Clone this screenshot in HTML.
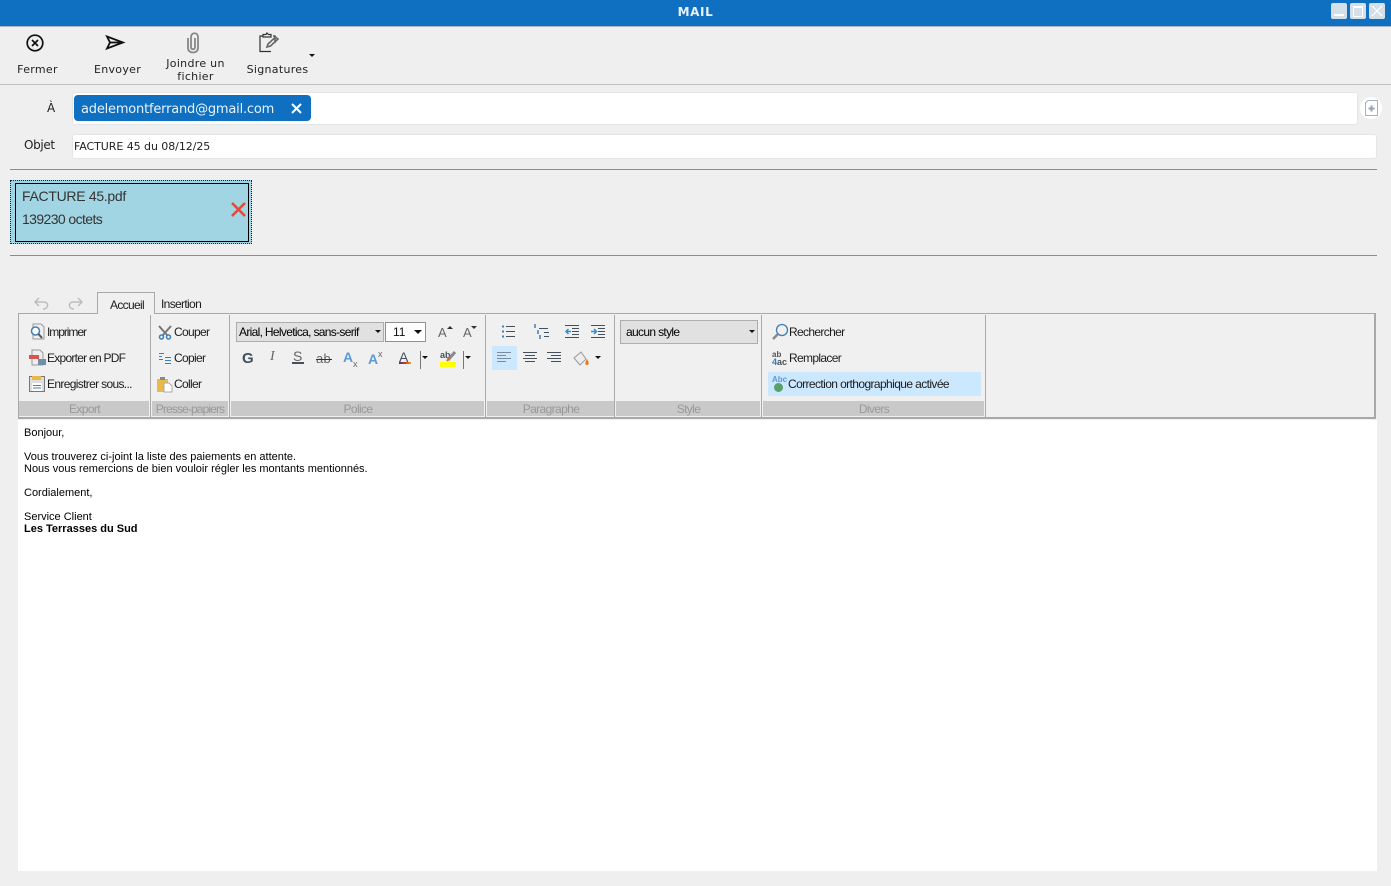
<!DOCTYPE html>
<html lang="fr"><head><meta charset="utf-8"><title>MAIL</title>
<style>
html,body{margin:0;padding:0;width:1391px;height:886px;overflow:hidden;background:#efefef;font-family:"Liberation Sans",sans-serif}
.a,.t{position:absolute}
.t{white-space:nowrap;line-height:14px}
.v{font-family:"DejaVu Sans",sans-serif;font-size:11px;letter-spacing:.3px;color:#222;text-align:center}
.r{font-size:12px;letter-spacing:-.66px;color:#1c1c1c}
.g{background:#c9c9c9;height:15px;top:401px;color:#999;font-size:12px;letter-spacing:-.62px;text-align:center;line-height:16px;white-space:nowrap;text-indent:1px;overflow:hidden}
.d{background:#a9a9a9;width:1px;top:315px;height:102px}
svg{position:absolute;overflow:visible}
.m{font-size:11px;line-height:12px;color:#000;left:24px;white-space:nowrap;position:absolute}
</style></head><body>
<div class="a" style="left:0;top:0;width:1391px;height:27px;background:#0f6fc0;border-bottom:1px solid #a8b4bf;box-sizing:border-box"></div>
<div class="t" style="left:0;width:1391px;top:5px;text-align:center;font:bold 12px/14px 'DejaVu Sans',sans-serif;letter-spacing:.6px;color:#e8f0f8">MAIL</div>
<div class="a" style="left:1331px;top:3px;width:16px;height:16px;background:#d5dfe8;border-radius:2px"></div>
<div class="a" style="left:1334px;top:14px;width:10px;height:2px;background:#fff"></div>
<div class="a" style="left:1350px;top:3px;width:16px;height:16px;background:#d5dfe8;border-radius:2px"></div>
<div class="a" style="left:1353px;top:6px;width:8px;height:8px;border:1px solid #fff;border-top-width:2px"></div>
<div class="a" style="left:1369px;top:3px;width:16px;height:16px;background:#d5dfe8;border-radius:2px"></div>
<svg style="left:1369px;top:3px" width="16" height="16"><path d="M3 3L13 13M13 3L3 13" stroke="#fff" stroke-width="1.2"/></svg>

<svg style="left:26px;top:34px" width="18" height="18" fill="none" stroke="#111"><circle cx="9" cy="9" r="7.800" stroke-width="1.700"/><path d="M6 6L12 12M12 6L6 12" stroke-width="1.700"/></svg>
<svg style="left:106px;top:35px" width="19" height="16" fill="none" stroke="#111" stroke-width="1.800"><path d="M1 1.500L17 7.500L1 13.500L4 7.500Z"/><path d="M4 7.500H17"/></svg>
<svg style="left:186px;top:33px" width="14" height="21" fill="none" stroke="#888" stroke-width="1.800"><path d="M2 5V15C2 21 12 21 12 15V4C12 -1 5 -1 5 4V14C5 17 9 17 9 14V5"/></svg>
<svg style="left:259px;top:32px" width="21" height="21" fill="none" stroke="#333" stroke-width="1.200"><path d="M14 4H16V11M12 19.500H1V4H4"/><path d="M4 5V2.500H7L8 1L9.500 2.500H12V5Z"/><path d="M8 15L9 12L16.500 5L19 7L11.500 14Z" stroke="#666" stroke-width="1.600"/></svg>
<div class="t v" style="left:12px;top:63px;width:51px">Fermer</div>
<div class="t v" style="left:87px;top:63px;width:61px">Envoyer</div>
<div class="t v" style="left:160px;top:57px;width:71px;line-height:13px;white-space:normal">Joindre un fichier</div>
<div class="t v" style="left:243px;top:63px;width:69px">Signatures</div>
<div class="a" style="left:309px;top:54px;border:3px solid transparent;border-top:3px solid #111;border-bottom:0;width:0"></div>
<div class="a" style="left:0;top:84px;width:1391px;height:1px;background:#bfbfbf"></div>

<div class="t" style="left:47px;top:101px;font:12px/14px 'DejaVu Sans',sans-serif;color:#222">À</div>
<div class="a" style="left:72px;top:92px;width:1286px;height:33px;background:#fff;border:1px solid #e3e6e8;box-sizing:border-box;border-radius:3px"></div>
<div class="a" style="left:74px;top:95px;width:237px;height:26px;background:#0f6fc0;border-radius:4px"></div>
<div class="t" style="left:81px;top:102px;font:13px/15px 'DejaVu Sans',sans-serif;letter-spacing:-.2px;color:#e8f3fb">adelemontferrand@gmail.com</div>
<svg style="left:291px;top:103px" width="11" height="11"><path d="M1 1L10 10M10 1L1 10" stroke="#fff" stroke-width="2"/></svg>
<div class="a" style="left:1360px;top:97px;width:22px;height:22px;border-radius:50%;background:#fff"></div>
<svg style="left:1365px;top:100px" width="13" height="16" fill="none"><path d="M3 .5H12.500V15.500H.5V3Z" stroke="#a3b2c2"/><path d="M6.500 5.500V11.500M3.500 8.500H9.500" stroke="#93a3b3" stroke-width="2"/></svg>
<div class="t" style="left:24px;top:138px;font:12px/14px 'DejaVu Sans',sans-serif;letter-spacing:-.35px;color:#222">Objet</div>
<div class="a" style="left:72px;top:134px;width:1305px;height:25px;background:#fff;border:1px solid #e3e6e8;box-sizing:border-box;border-radius:3px"></div>
<div class="t" style="left:74px;top:140px;font:11px/14px 'DejaVu Sans',sans-serif;letter-spacing:-.06px;color:#222">FACTURE 45 du 08/12/25</div>
<div class="a" style="left:10px;top:169px;width:1367px;height:1px;background:#8c8c8c"></div>

<div class="a" style="left:10px;top:180px;width:242px;height:64px;box-sizing:border-box;background:#a2d5e3;border:1px dotted #222"></div>
<div class="a" style="left:15px;top:183px;width:234px;height:59px;box-sizing:border-box;background:#a2d5e3;border:1px solid #000"></div>
<div class="t" style="left:22px;top:188px;font-size:14px;line-height:16px;letter-spacing:-.3px;color:#333">FACTURE 45.pdf</div>
<div class="t" style="left:22px;top:211px;font-size:14px;line-height:16px;letter-spacing:-.6px;color:#333">139230 octets</div>
<svg style="left:231px;top:202px" width="15" height="15"><path d="M1 1L14 14M14 1L1 14" stroke="#e04a3a" stroke-width="2.600"/></svg>
<div class="a" style="left:10px;top:255px;width:1367px;height:1px;background:#8c8c8c"></div>

<svg style="left:34px;top:297px" width="16" height="14" fill="none" stroke="#bdbdbd" stroke-width="1.500"><path d="M5 1L1 5L5 9M1 5H10C15 5 15 12 9 12"/></svg>
<svg style="left:67px;top:297px" width="16" height="14" fill="none" stroke="#bdbdbd" stroke-width="1.500"><path d="M11 1L15 5L11 9M15 5H6C1 5 1 12 7 12"/></svg>
<div class="a" style="left:18px;top:313px;width:1358px;height:106px;background:#f0f0f0;border:1px solid #a9a9a9;border-right-width:2px;border-bottom-width:2px;box-sizing:border-box"></div>
<div class="a" style="left:97px;top:292px;width:58px;height:22px;background:#f0f0f0;border:1px solid #a9a9a9;border-bottom:0;box-sizing:border-box"></div>
<div class="t r" style="left:110px;top:298px">Accueil</div>
<div class="t r" style="left:161px;top:297px">Insertion</div>

<div class="a d" style="left:150px"></div><div class="a d" style="left:229px"></div><div class="a d" style="left:485px"></div><div class="a d" style="left:614px"></div><div class="a d" style="left:761px"></div><div class="a d" style="left:985px"></div>
<div class="a g" style="left:19px;width:130px">Export</div>
<div class="a g" style="left:152px;width:76px;text-indent:0;letter-spacing:-.88px">Presse-papiers</div>
<div class="a g" style="left:231px;width:253px">Police</div>
<div class="a g" style="left:487px;width:127px">Paragraphe</div>
<div class="a g" style="left:616px;width:144px">Style</div>
<div class="a g" style="left:763px;width:221px">Divers</div>

<!-- Export -->
<svg style="left:29px;top:323px" width="17" height="17" fill="none"><path d="M4 1H12L15 4V16H4Z" fill="#eee" stroke="#999"/><circle cx="6.500" cy="8" r="4" fill="#fff" stroke="#3d7fb8" stroke-width="1.500"/><path d="M9.500 11L13 15" stroke="#555" stroke-width="2"/></svg>
<svg style="left:29px;top:349px" width="17" height="17" fill="none"><path d="M3 1H11L14 4V16H3Z" fill="#eee" stroke="#999"/><rect x="0" y="6" width="10" height="4" fill="#d9534f"/><rect x="9" y="10" width="8" height="6" fill="#6f8fa8"/></svg>
<svg style="left:29px;top:375px" width="16" height="17"><rect x=".5" y="1.500" width="15" height="15" fill="#ddd" stroke="#777"/><rect x="3" y="1" width="9" height="4" fill="#e8b84a"/><rect x="3" y="8" width="10" height="8" fill="#fff"/><path d="M4 10.500H12M4 13H12" stroke="#4a7fb0"/></svg>
<div class="t r" style="left:47px;top:325px;letter-spacing:-1.05px">Imprimer</div>
<div class="t r" style="left:47px;top:351px;letter-spacing:-.74px">Exporter en PDF</div>
<div class="t r" style="left:47px;top:377px">Enregistrer sous...</div>

<!-- Presse-papiers -->
<svg style="left:158px;top:325px" width="14" height="15" fill="none"><path d="M1 1L9 10M13 1L5 10" stroke="#777" stroke-width="2"/><circle cx="3.500" cy="12" r="2" stroke="#3d7fb8" stroke-width="1.500"/><circle cx="10.500" cy="12" r="2" stroke="#3d7fb8" stroke-width="1.500"/></svg>
<svg style="left:158px;top:352px" width="14" height="13" fill="none" stroke="#3d7fb8"><path d="M1 1.500H6M1 4.500H4M1 7.500H5M7 5.500H13M7 8.500H13M7 11.500H13"/></svg>
<svg style="left:157px;top:376px" width="16" height="16"><rect x="0" y="3" width="11" height="13" fill="#e9b949"/><rect x="3" y="1" width="5" height="3" fill="#888"/><path d="M7 7H12L15 10V16H7Z" fill="#fff" stroke="#aaa"/></svg>
<div class="t r" style="left:174px;top:325px">Couper</div>
<div class="t r" style="left:174px;top:351px">Copier</div>
<div class="t r" style="left:174px;top:377px">Coller</div>

<!-- Police -->
<div class="a" style="left:236px;top:322px;width:148px;height:20px;background:#e1e1e1;border:1px solid #adadad;box-sizing:border-box"></div>
<div class="t r" style="left:239px;top:325px;color:#000;letter-spacing:-.68px">Arial, Helvetica, sans-serif</div>
<div class="a" style="left:375px;top:330px;border:3px solid transparent;border-top:3px solid #111;border-bottom:0"></div>
<div class="a" style="left:385px;top:322px;width:41px;height:20px;background:#fff;border:1px solid #8f8f8f;box-sizing:border-box"></div>
<div class="t" style="left:393px;top:325px;font-size:12px;color:#111">11</div>
<div class="a" style="left:414px;top:330px;border:4px solid transparent;border-top:4px solid #111;border-bottom:0"></div>
<div class="t" style="left:438px;top:326px;font-size:13px;color:#666">A</div><div class="a" style="left:447px;top:326px;border:3px solid transparent;border-bottom:3px solid #333;border-top:0"></div>
<div class="t" style="left:463px;top:326px;font-size:13px;color:#666">A</div><div class="a" style="left:471px;top:326px;border:3px solid transparent;border-top:3px solid #333;border-bottom:0"></div>
<div class="t" style="left:242px;top:352px;font:bold 15px/14px 'Liberation Sans',sans-serif;color:#44505c">G</div>
<div class="t" style="left:270px;top:350px;font:italic 14px/14px 'Liberation Serif',serif;color:#666">I</div>
<div class="t" style="left:293px;top:349px;font-size:14px;color:#666">S</div><div class="a" style="left:292px;top:362px;width:12px;height:2px;background:#44505c"></div>
<div class="t" style="left:316px;top:352px;font-size:13px;color:#666;letter-spacing:.3px">ab</div><div class="a" style="left:316px;top:359px;width:16px;height:1px;background:#333"></div>
<div class="t" style="left:343px;top:350px;font:bold 14px/14px 'Liberation Sans',sans-serif;color:#5b9bd5">A</div><div class="t" style="left:353px;top:357px;font-size:9px;color:#666">x</div>
<div class="t" style="left:368px;top:352px;font:bold 14px/14px 'Liberation Sans',sans-serif;color:#5b9bd5">A</div><div class="t" style="left:378px;top:347px;font-size:9px;color:#666">x</div>
<div class="t" style="left:399px;top:350px;font-size:14px;color:#44505c">A</div>
<div class="a" style="left:399px;top:362px;width:12px;height:2px;background:linear-gradient(90deg,#3a3a8a,#c33,#e8a020)"></div>
<div class="a" style="left:420px;top:351px;width:1px;height:18px;background:#777"></div><div class="a" style="left:422px;top:356px;border:3px solid transparent;border-top:3px solid #111;border-bottom:0"></div>
<div class="t" style="left:440px;top:350px;font:bold 9px/10px 'Liberation Sans',sans-serif;color:#44505c">ab</div>
<svg style="left:446px;top:351px" width="11" height="11"><path d="M2 9L9 1" stroke="#888" stroke-width="3"/><path d="M1 10L3 7" stroke="#e0603a" stroke-width="2"/></svg>
<div class="a" style="left:440px;top:362px;width:16px;height:5px;background:#ffff00"></div>
<div class="a" style="left:463px;top:351px;width:1px;height:18px;background:#777"></div><div class="a" style="left:465px;top:356px;border:3px solid transparent;border-top:3px solid #111;border-bottom:0"></div>

<!-- Paragraphe -->
<svg style="left:502px;top:325px" width="13" height="13" fill="none"><path d="M4 1.500H13M4 6.500H13M4 11.500H13" stroke="#44505c"/><path d="M0 1.500H2M0 6.500H2M0 11.500H2" stroke="#3d7fb8" stroke-width="2"/></svg>
<svg style="left:534px;top:324px" width="16" height="16" fill="none"><path d="M5 4.500H14M10 8.500H15M10 12.500H15" stroke="#44505c"/><path d="M1 0V4M4 6V10M6 11V15" stroke="#3d7fb8" stroke-width="1.500"/></svg>
<svg style="left:565px;top:325px" width="14" height="13" fill="none"><path d="M0 .5H14M7 3.500H14M7 6.500H14M7 9.500H14M0 12.500H14" stroke="#44505c"/><path d="M6 6.500H1M3.500 4L1 6.500L3.500 9" stroke="#2f8fd0" stroke-width="1.500"/></svg>
<svg style="left:591px;top:325px" width="14" height="13" fill="none"><path d="M0 .5H14M7 3.500H14M7 6.500H14M7 9.500H14M0 12.500H14" stroke="#44505c"/><path d="M0 6.500H5M3 4L5.500 6.500L3 9" stroke="#2f8fd0" stroke-width="1.500"/></svg>
<div class="a" style="left:492px;top:346px;width:25px;height:24px;background:#cce8ff"></div>
<svg style="left:497px;top:352px" width="14" height="12" fill="none" stroke="#7d8a97"><path d="M0 .5H14M0 3.500H9M0 6.500H14M0 9.500H9"/></svg>
<svg style="left:523px;top:352px" width="14" height="12" fill="none" stroke="#44505c"><path d="M0 .5H14M2 3.500H12M0 6.500H14M2 9.500H12"/></svg>
<svg style="left:547px;top:352px" width="14" height="12" fill="none" stroke="#44505c"><path d="M0 .5H14M4 3.500H14M0 6.500H14M4 9.500H14"/></svg>
<svg style="left:573px;top:350px" width="17" height="16"><path d="M1 8L8 2L13 9L7 15Z" fill="#eee" stroke="#999"/><path d="M14 9C12 12 11.500 15 14 15C16.500 15 16 12 14 9Z" fill="#ee7a1f"/></svg>
<div class="a" style="left:595px;top:356px;border:3px solid transparent;border-top:3px solid #111;border-bottom:0"></div>

<!-- Style -->
<div class="a" style="left:620px;top:320px;width:138px;height:24px;background:#e1e1e1;border:1px solid #adadad;box-sizing:border-box"></div>
<div class="t r" style="left:626px;top:325px;color:#000">aucun style</div>
<div class="a" style="left:749px;top:330px;border:3px solid transparent;border-top:3px solid #111;border-bottom:0"></div>

<!-- Divers -->
<svg style="left:771px;top:323px" width="18" height="18" fill="none"><circle cx="11" cy="7" r="5.500" stroke="#3d7fb8" stroke-width="1.300"/><path d="M7 11L2 16" stroke="#888" stroke-width="2.500"/></svg>
<div class="t" style="left:772px;top:351px;font:bold 8px/8px 'Liberation Sans',sans-serif;color:#555">ab</div>
<div class="t" style="left:772px;top:358px;font:bold 9px/9px 'Liberation Sans',sans-serif;color:#2f7fc0">4<span style="color:#44505c">ac</span></div>
<div class="a" style="left:768px;top:372px;width:213px;height:24px;background:#cce8ff"></div>
<div class="t" style="left:772px;top:375px;font:bold 8px/9px 'Liberation Sans',sans-serif;color:#5b9bd5">Abc</div>
<div class="a" style="left:774px;top:383px;width:9px;height:9px;border-radius:50%;background:#5aa06a"></div>
<div class="t r" style="left:789px;top:325px">Rechercher</div>
<div class="t r" style="left:789px;top:351px">Remplacer</div>
<div class="t r" style="left:788px;top:377px;letter-spacing:-.6px">Correction orthographique activée</div>

<!-- Body -->
<div class="a" style="left:18px;top:420px;width:1359px;height:451px;background:#fff"></div>
<div class="m" style="top:427px">Bonjour,</div>
<div class="m" style="top:451px">Vous trouverez ci-joint la liste des paiements en attente.</div>
<div class="m" style="top:463px">Nous vous remercions de bien vouloir régler les montants mentionnés.</div>
<div class="m" style="top:487px">Cordialement,</div>
<div class="m" style="top:511px">Service Client</div>
<div class="m" style="top:523px;font-weight:bold">Les Terrasses du Sud</div>
</body></html>
